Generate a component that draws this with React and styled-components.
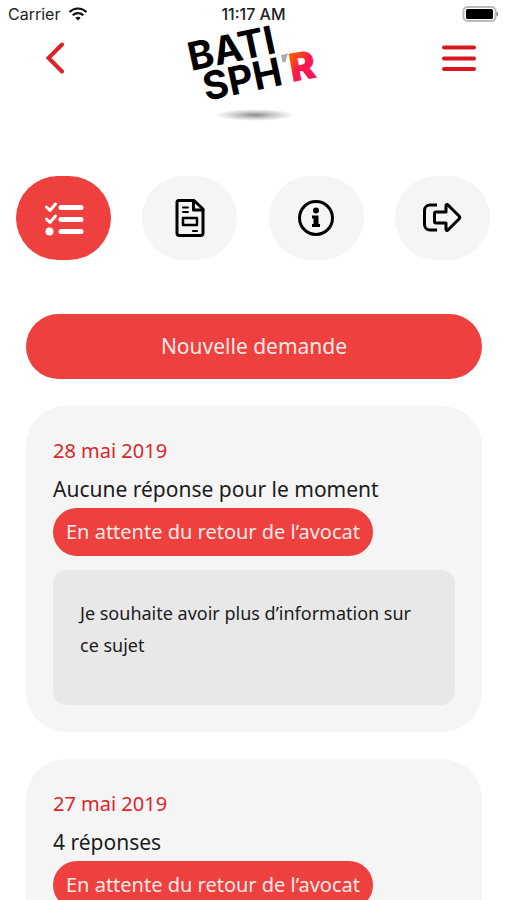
import React, { useState } from "react";
import styled, { createGlobalStyle } from "styled-components";

const RED = "#ee403f";
const DARK_RED = "#d9272b";
const LIGHT = "#f5f5f5";

const REQUESTS = [
  {
    id: 1,
    date: "28 mai 2019",
    answers: "Aucune réponse pour le moment",
    status: "En attente du retour de l’avocat",
    message: "Je souhaite avoir plus d’information sur ce sujet",
  },
  {
    id: 2,
    date: "27 mai 2019",
    answers: "4 réponses",
    status: "En attente du retour de l’avocat",
  },
];

const WifiIcon = () => (
  <svg width="20" height="14" viewBox="0 0 20 14" fill="none" stroke="#111">
    <path d="M1.5 5C6.4.3 13.6.3 18.5 5" strokeWidth="2.2" />
    <path d="M4.7 8.2c3-2.8 7.6-2.8 10.6 0" strokeWidth="2.2" />
    <path d="M10 13.5L7.3 10.8c1.5-1.4 3.9-1.4 5.4 0z" fill="#111" stroke="none" />
  </svg>
);

const BatteryIcon = () => (
  <svg width="37" height="16" viewBox="0 0 37 16">
    <rect x="1.5" y="1" width="32" height="14" rx="4" fill="#fff" stroke="#bbb" strokeWidth="2" />
    <rect x="4" y="3" width="27" height="10" rx="1.5" fill="#000" />
    <path d="M34.5 5.5c2 .8 2 4.200 0 5z" fill="#777" />
  </svg>
);

const BackIcon = () => (
  <svg width="20" height="32" viewBox="0 0 20 32" fill="none">
    <path d="M17 2.5L3.500 16 17 29.5" stroke="#df2227" strokeWidth="4" strokeLinecap="round" />
  </svg>
);

const MenuIcon = () => (
  <svg width="34" height="28" viewBox="0 0 34 28">
    <path
      d="M2 3.500h30M2 14.500h30M2 25h30"
      stroke="#d8161b"
      strokeWidth="4"
      strokeLinecap="round"
    />
  </svg>
);

const Logo = () => (
  <LogoSvg width="140" height="104" viewBox="0 0 140 104" role="img" aria-label="Bati Sph'R">
    <defs>
      <linearGradient id="logo-r" x1="0" y1="0" x2="0.4" y2="1">
        <stop offset="0.3" stopColor="#fb5310" />
        <stop offset="0.6" stopColor="#fb1a4a" />
        <stop offset="1" stopColor="#f9115c" />
      </linearGradient>
      <radialGradient id="logo-shadow">
        <stop offset="0" stopColor="#000" stopOpacity="0.45" />
        <stop offset="0.5" stopColor="#000" stopOpacity="0.2" />
        <stop offset="1" stopColor="#000" stopOpacity="0" />
      </radialGradient>
    </defs>
    <g fontFamily="Inter, sans-serif" fontSize="39" fontWeight="700" fill="#000">
      <text transform="translate(8 47) rotate(-12)">BATI</text>
      <text transform="translate(23 77) rotate(-12)">SPH</text>
      <text transform="translate(109 58) rotate(-10)" fontWeight="900" fill="url(#logo-r)">
        R
      </text>
    </g>
    <path d="M98 31l7-1.500-2.500 8.500-3 .5z" fill="#a9adae" />
    <ellipse cx="72" cy="91" rx="40" ry="6" fill="url(#logo-shadow)" />
  </LogoSvg>
);

const ListIcon = () => (
  <svg width="40" height="36" viewBox="0 0 40 36" fill="none" stroke="currentColor">
    <path d="M17 7.500h20M17 19.500h20M17 31.500h20" strokeWidth="5" strokeLinecap="round" />
    <path
      d="M2.500 7l3.500 3.500L11.500 4M2.500 19L6 22.500 11.500 16"
      strokeWidth="3"
      strokeLinecap="round"
      strokeLinejoin="round"
    />
    <circle cx="5.500" cy="31.500" r="4" fill="currentColor" stroke="none" />
  </svg>
);

const FileIcon = () => (
  <svg
    width="30"
    height="38"
    viewBox="0 0 30 38"
    fill="none"
    stroke="currentColor"
    strokeLinejoin="round"
    strokeLinecap="round"
  >
    <path
      d="M3.500 1.500H19L28 10v24a2.500 2.500 0 0 1-2.500 2.500h-21A2.500 2.500 0 0 1 2 34V3.500a2 2 0 0 1 1.500-2z"
      strokeWidth="3"
    />
    <path d="M18.500 2v9H28" strokeWidth="3" />
    <path d="M8 8.500h5M8 13h5M18 32h4" strokeWidth="2" />
    <rect x="8" y="19" width="14" height="7" strokeWidth="2.500" />
  </svg>
);

const InfoIcon = () => (
  <svg width="38" height="38" viewBox="0 0 38 38" fill="none">
    <circle cx="19" cy="19" r="16.500" stroke="currentColor" strokeWidth="3" />
    <circle cx="19" cy="11.500" r="3" fill="currentColor" />
    <path d="M15 16.500h6.500V25H23v3h-8v-3h1.500v-5.500H15z" fill="currentColor" />
  </svg>
);

const ExitIcon = () => (
  <svg
    width="40"
    height="32"
    viewBox="0 0 40 32"
    fill="none"
    stroke="currentColor"
    strokeWidth="3"
    strokeLinejoin="round"
  >
    <path d="M15 3H8a5.500 5.500 0 0 0-5.500 5.500v14A5.500 5.500 0 0 0 8 28h7" />
    <path d="M14 10h10V4c0-1.500 1-2 2-1l11 11c1 1 1 2 0 3L26 28c-1 1-2 .5-2-1v-6H14a1.500 1.500 0 0 1-1.500-1.500v-8A1.500 1.500 0 0 1 14 10z" />
  </svg>
);

const TABS = [
  { id: "requests", label: "Demandes", Icon: ListIcon },
  { id: "documents", label: "Documents", Icon: FileIcon },
  { id: "infos", label: "Informations", Icon: InfoIcon },
  { id: "exit", label: "Quitter", Icon: ExitIcon },
];

const App = () => {
  const [tab, setTab] = useState("requests");
  return (
    <Screen>
      <GlobalStyle />
      <StatusBar>
        <Carrier>
          Carrier <WifiIcon />
        </Carrier>
        <Time>11:17 AM</Time>
        <Battery>
          <BatteryIcon />
        </Battery>
      </StatusBar>
      <Header>
        <BackButton type="button" aria-label="Retour">
          <BackIcon />
        </BackButton>
        <Logo />
        <MenuButton type="button" aria-label="Menu">
          <MenuIcon />
        </MenuButton>
      </Header>
      <Tabs>
        {TABS.map(({ id, label, Icon }) => (
          <TabButton
            key={id}
            type="button"
            aria-label={label}
            $active={tab === id}
            onClick={() => setTab(id)}
          >
            <Icon />
          </TabButton>
        ))}
      </Tabs>
      <Content>
        <NewRequestButton type="button">Nouvelle demande</NewRequestButton>
        {REQUESTS.map((request) => (
          <Card key={request.id}>
            <CardDate>{request.date}</CardDate>
            <Answers>{request.answers}</Answers>
            <Status>{request.status}</Status>
            {request.message && <Message>{request.message}</Message>}
          </Card>
        ))}
      </Content>
    </Screen>
  );
};

const GlobalStyle = createGlobalStyle`
  * {
    box-sizing: border-box;
  }
  body {
    margin: 0;
    background: #fff;
    color: #1c1c1c;
    font-family: "Noto Sans", sans-serif;
  }
  button {
    appearance: none;
    border: 0;
    padding: 0;
    font: inherit;
    cursor: pointer;
  }
  svg {
    display: block;
  }
`;

const Screen = styled.div`
  height: 100vh;
  overflow: hidden auto;
  scrollbar-width: none;
`;

const StatusBar = styled.div`
  display: grid;
  grid-template-columns: 1fr auto 1fr;
  align-items: center;
  height: 24px;
  padding: 4px 7px 0 8px;
  font-family: Inter, sans-serif;
  font-size: 16px;
  line-height: 20px;
  color: #222;
`;

const Carrier = styled.span`
  display: flex;
  align-items: center;
  gap: 8px;
`;

const Time = styled.span`
  font-weight: 500;
`;

const Battery = styled.span`
  justify-self: end;
`;

const Header = styled.header`
  display: grid;
  grid-template-columns: 1fr auto 1fr;
  align-items: start;
  height: 104px;
  padding: 0 30px;
`;

const LogoSvg = styled.svg`
  overflow: visible;
`;

const BackButton = styled.button`
  display: flex;
  align-items: center;
  justify-self: start;
  height: 68px;
  padding: 0 15px;
  background: none;
`;

const MenuButton = styled(BackButton)`
  justify-self: end;
  padding: 0;
`;

const Tabs = styled.nav`
  display: flex;
  justify-content: space-between;
  padding: 48px 16px 0;
`;

const TabButton = styled.button`
  display: flex;
  align-items: center;
  justify-content: center;
  width: 95px;
  height: 84px;
  border-radius: 42px;
  background: ${(props) => (props.$active ? RED : LIGHT)};
  color: ${(props) => (props.$active ? "#fff" : "#000")};
`;

const Content = styled.main`
  display: flex;
  flex-direction: column;
  gap: 27px;
  padding: 54px 24px 27px 26px;
`;

const NewRequestButton = styled.button`
  height: 65px;
  padding-bottom: 2px;
  border-radius: 33px;
  background: ${RED};
  color: #ffe9e6;
  font-size: 21px;
`;

const Card = styled.article`
  display: flex;
  flex-direction: column;
  align-items: flex-start;
  padding: 26px 27px 27px;
  border-radius: 40px;
  background: ${LIGHT};
  line-height: 38px;
`;

const CardDate = styled.time`
  color: ${DARK_RED};
  font-size: 20px;
`;

const Answers = styled.span`
  font-size: 21px;
`;

const Status = styled.span`
  padding: 0 13px;
  border-radius: 24px;
  background: ${RED};
  color: #ffe9e6;
  font-size: 20px;
  line-height: 48px;
`;

const Message = styled.p`
  align-self: stretch;
  min-height: 135px;
  margin: 14px 0 0;
  padding: 27px;
  border-radius: 14px;
  background: #e8e8e8;
  font-size: 18px;
  line-height: 32px;
`;

export default App;
